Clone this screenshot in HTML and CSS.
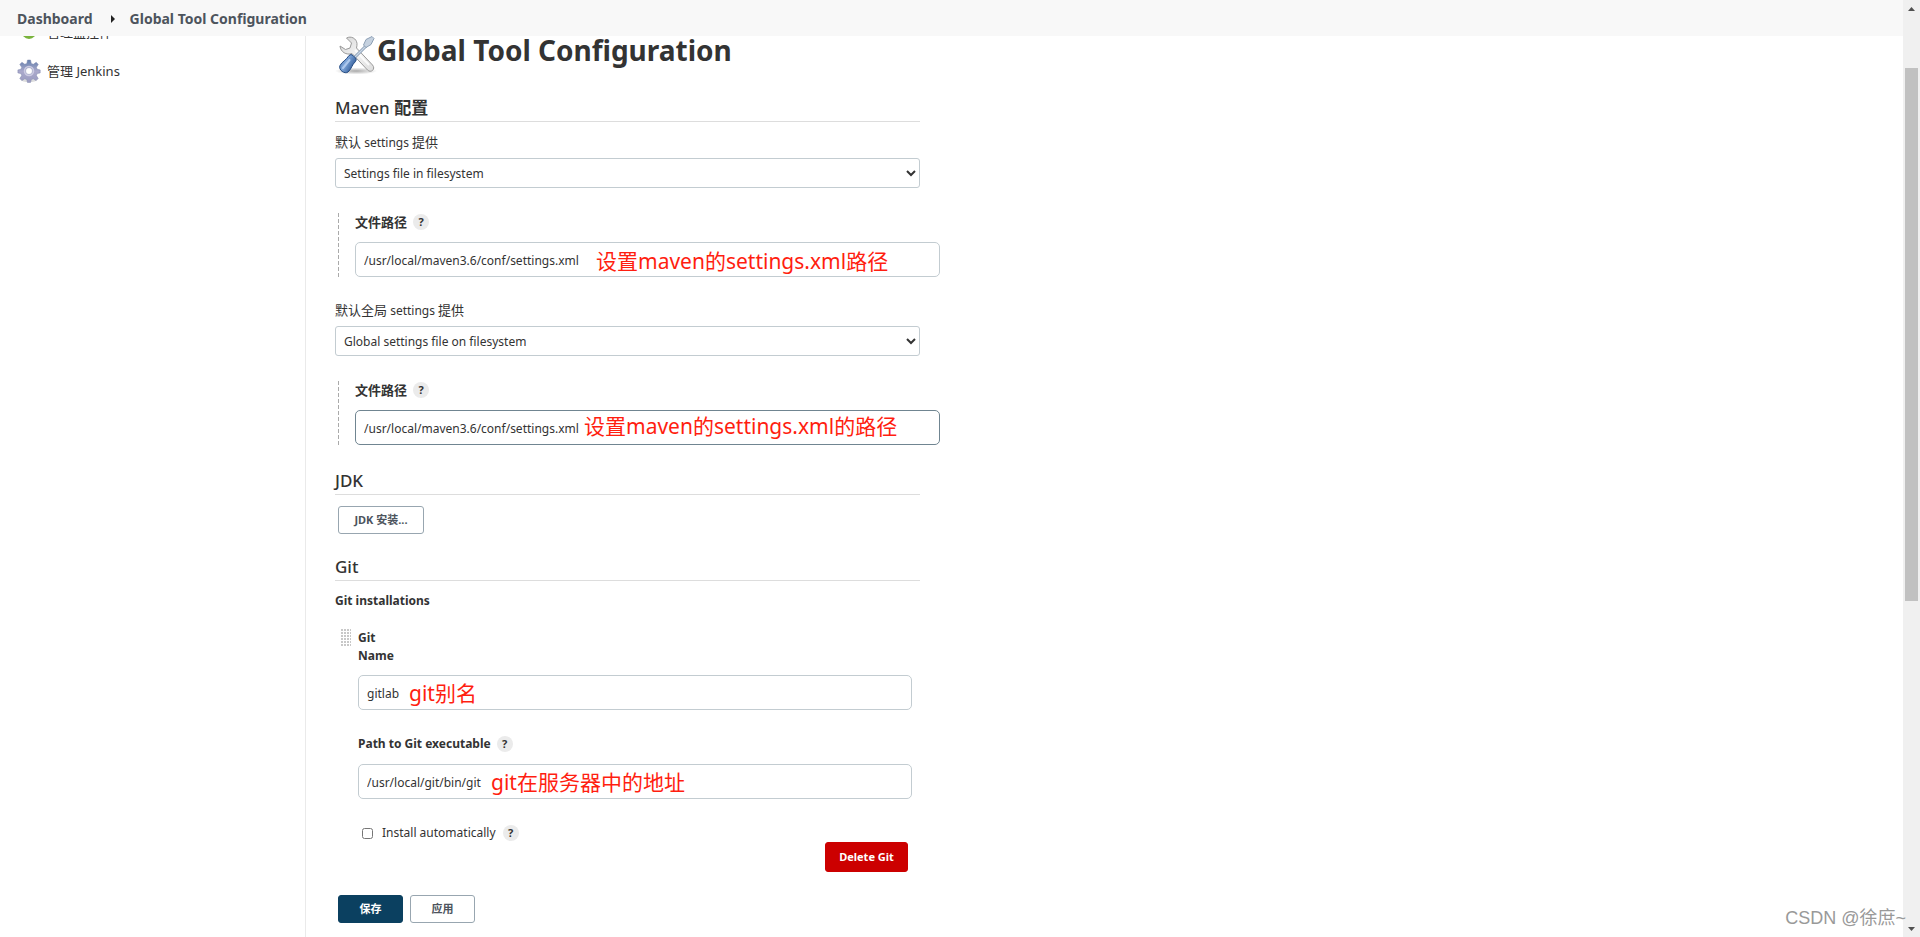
FILE: index.html
```html
<!DOCTYPE html>
<html lang="zh-CN">
<head>
<meta charset="utf-8">
<title>Global Tool Configuration [Jenkins]</title>
<link rel="stylesheet" href="styles.css">
</head>
<body>
<div class="viewport">
  <nav class="breadcrumbs" aria-label="Breadcrumb">
    <a href="#">Dashboard</a>
    <svg class="crumb-arrow" viewBox="0 0 4 8" aria-hidden="true"><path d="M0 0L4 4L0 8Z" fill="#222"/></svg>
    <a href="#">Global Tool Configuration</a>
  </nav>
  <div class="page">
    <aside class="sidebar">
      <a class="task" href="#">
        <svg viewBox="0 0 24 24" aria-hidden="true"><ellipse cx="12" cy="10" rx="8" ry="9" fill="#79b33c"/><circle cx="12" cy="9" r="5" fill="#c5e59c"/></svg>
        <span>管理监控件</span>
      </a>
      <a class="task" href="#">
        <svg viewBox="0 0 24 24" aria-hidden="true">
          <defs><linearGradient id="gear" x1="0" y1="0" x2="0" y2="1"><stop offset="0" stop-color="#6480ae"/><stop offset=".5" stop-color="#aaa9cb"/><stop offset="1" stop-color="#9a9bc0"/></linearGradient></defs>
          <ellipse cx="12" cy="21" rx="8" ry="2" fill="#ddd"/>
          <path fill="url(#gear)" stroke="#8189ae" stroke-width=".5" fill-rule="evenodd" d="M10.500 1h3l.8 3.400 2 .9 2.900-2 2.100 2.100-1.900 2.900.8 2 3 .6v3l-3 .7-.8 2 1.800 2.900-2.100 2.100-2.900-1.800-1.900.8-.8 3h-3l-.7-3-2-.8-2.900 1.800-2.100-2.100 1.900-2.900-.8-2-3-.7v-3l3-.6.8-2-1.900-2.900 2.100-2.100 2.900 2 2-.9zM12 8.500a3.500 3.500 0 1 0 0 7 3.500 3.500 0 0 0 0-7z"/>
          <circle cx="12" cy="12" r="4.500" fill="none" stroke="#cccbe2" stroke-width="1.500"/>
        </svg>
        <span>管理 Jenkins</span>
      </a>
    </aside>
    <main class="main">
      <h1>
        <svg viewBox="0 0 42 42" aria-hidden="true">
          <defs>
            <linearGradient id="steel" x1="0" y1="0" x2="1" y2="1"><stop offset="0" stop-color="#d4d4d4"/><stop offset=".5" stop-color="#f3f3f3"/><stop offset="1" stop-color="#dcdcdc"/></linearGradient>
            <linearGradient id="grip" x1="0" y1="0" x2="1" y2=".6"><stop offset="0" stop-color="#315f9f"/><stop offset=".45" stop-color="#81a8db"/><stop offset="1" stop-color="#2a5592"/></linearGradient>
            <radialGradient id="shade"><stop offset="0" stop-color="#aaa"/><stop offset="1" stop-color="#fff"/></radialGradient>
          </defs>
          <ellipse cx="21" cy="36" rx="21" ry="3.500" fill="url(#shade)"/>
          <path fill="url(#steel)" stroke="#9a9a9a" d="M11.500 3C16 .5 21.500 3.500 22 8.500c.1 1.500-.2 3-.5 4.500L37.500 30c3.500 4-1.500 8.500-5 5L17 18.500C11.500 20.500 5.500 17 5 11l5.500 3.500 4.500-1.500 1.500-5z"/>
          <path d="M20 15L34 30" stroke="#fff" stroke-width="2" opacity=".8"/>
          <path d="M18.500 23.500L31 11" stroke="#8298b0" stroke-width="3"/>
          <path d="M18.500 23.500L31 11" stroke="#cbd7e5" stroke-width="1.500"/>
          <path fill="#c5d1df" stroke="#8c9fb4" d="M28.500 10L31 4.500l6-3 2 2-3 6-5 3z"/>
          <path fill="url(#grip)" stroke="#234a82" d="M14 20.500q2-2 4 0l2.500 2.500q1.500 1.500 0 3.500c-4 3.500-3.500 7-7.500 10.500-3 2.500-10-2-8-6.500 2-4 6-5 9-10z"/>
          <path d="M14.500 25L8 33" stroke="#adc8ed" stroke-width="2" stroke-linecap="round"/>
        </svg>
        <span>Global Tool Configuration</span>
      </h1>
      <form class="config">
        <section>
          <h2>Maven <b>配置</b></h2>
          <label class="field-label" for="p1"><span class="cjk">默认</span> settings <span class="cjk">提供</span></label>
          <select id="p1"><option>Settings file in filesystem</option></select>
          <div class="nested">
            <div class="label-row"><label class="cjk" for="f1">文件路径</label><button type="button" class="help" aria-label="Help">?</button></div>
            <div class="annotated"><input id="f1" type="text" value="/usr/local/maven3.6/conf/settings.xml"><span class="note note-a">设置maven的settings.xml路径</span></div>
          </div>
          <label class="field-label" for="p2"><span class="cjk">默认全局</span> settings <span class="cjk">提供</span></label>
          <select id="p2"><option>Global settings file on filesystem</option></select>
          <div class="nested">
            <div class="label-row"><label class="cjk" for="f2">文件路径</label><button type="button" class="help" aria-label="Help">?</button></div>
            <div class="annotated"><input id="f2" class="active" type="text" value="/usr/local/maven3.6/conf/settings.xml"><span class="note note-b">设置maven的settings.xml的路径</span></div>
          </div>
        </section>
        <section>
          <h2>JDK</h2>
          <button type="button" class="btn jdk">JDK 安装...</button>
        </section>
        <section>
          <h2>Git</h2>
          <h3>Git installations</h3>
          <div class="tool">
            <svg class="drag" viewBox="0 0 10 18" aria-hidden="true"><defs><pattern id="dots" width="3" height="3" patternUnits="userSpaceOnUse"><path d="M0 0h2v2h-2z" fill="#c8c8c8"/></pattern></defs><path d="M0 0h10v18H0z" fill="url(#dots)"/></svg>
            <div class="tool-body">
              <div class="tool-line">Git</div>
              <label class="tool-line" for="g1">Name</label>
              <div class="annotated"><input id="g1" type="text" value="gitlab"><span class="note note-c">git别名</span></div>
              <div class="label-row path"><label for="g2">Path to Git executable</label><button type="button" class="help" aria-label="Help">?</button></div>
              <div class="annotated"><input id="g2" type="text" value="/usr/local/git/bin/git"><span class="note note-d">git在服务器中的地址</span></div>
              <div class="check-row"><input id="auto" type="checkbox"><label for="auto">Install automatically</label><button type="button" class="help" aria-label="Help">?</button></div>
              <div class="delete-row"><button type="button" class="btn danger">Delete Git</button></div>
            </div>
          </div>
        </section>
        <div class="actions"><button type="submit" class="btn primary">保存</button><button type="button" class="btn apply">应用</button></div>
      </form>
    </main>
  </div>
  <div class="scrollbar" aria-hidden="true">
    <svg viewBox="0 0 7 4"><path d="M0 4L3.500 0L7 4Z" fill="#505050"/></svg>
    <div class="track"><div class="thumb"></div></div>
    <svg viewBox="0 0 7 4"><path d="M0 0L3.500 4L7 0Z" fill="#505050"/></svg>
  </div>
  <div class="watermark">CSDN @徐庶~</div>
</div>
</body>
</html>
```

FILE: styles.css
```css
* { box-sizing: border-box; }
body {
  margin: 0;
  color: #333;
  background: #fff;
  font: 12px/18px "Noto Sans", "Noto Sans CJK SC", sans-serif;
}
a { color: inherit; text-decoration: none; }
button, input, select { font: inherit; color: inherit; margin: 0; }
.viewport {
  position: relative;
  height: 100vh;
  overflow: hidden;
  display: grid;
  grid-template: 36px 1fr / 1fr 17px;
}
.breadcrumbs {
  display: flex;
  align-items: center;
  gap: 15px;
  padding: 2px 17px 0;
  background: #f8f8f8;
  color: #4d545d;
  font-size: 14px;
  font-weight: 700;
}
.crumb-arrow { width: 4px; height: 8px; margin-left: 3px; }
.page {
  grid-row: 2;
  display: flex;
  min-height: 0;
  overflow: hidden;
}
.sidebar {
  flex: 0 0 306px;
  border-right: 1px solid #eaeaea;
  padding-left: 17px;
  display: flex;
  flex-direction: column;
  margin-top: -24px;
}
.task { display: flex; align-items: center; gap: 6px; height: 39px; flex: none; }
.task svg { width: 24px; height: 24px; }
.task span { font-size: 13px; }
.main { flex: 1; padding-left: 29px; min-width: 0; }
h1 {
  display: flex;
  align-items: center;
  height: 40px;
  margin: 0 0 20px;
  font-size: 28px;
  line-height: 32px;
}
h1 svg { width: 42px; height: 42px; flex: none; }
h1 span { padding-bottom: 12px; }
.config { max-width: 585px; }
h2 {
  margin: 0 0 11px;
  padding-bottom: 2px;
  border-bottom: 1px solid #ddd;
  font-size: 17px;
  line-height: 23px;
  font-weight: 500;
}
.field-label { display: block; height: 18px; margin-bottom: 7px; }
.cjk { font-size: 13px; }
select {
  display: block;
  width: 100%;
  height: 30px;
  padding: 0 4px;
  border: 1px solid #c3ccd1;
  border-radius: 3px;
  background: #fff;
}
.nested {
  width: 100%;
  margin: 25px 0 24px 3px;
  padding-left: 17px;
  background: repeating-linear-gradient(#aaa 0 4px, transparent 4px 6px) left / 1px 100% no-repeat;
  box-sizing: content-box;
}
.label-row { display: flex; align-items: center; gap: 6px; height: 18px; margin-bottom: 11px; font-weight: 700; }
.help {
  width: 16px;
  height: 16px;
  padding: 0;
  border: 0;
  border-radius: 8px;
  background: #ebebeb;
  font-size: 11px;
  line-height: 16px;
  font-weight: 700;
}
.annotated { position: relative; }
input[type="text"] {
  display: block;
  width: 100%;
  height: 35px;
  padding: 1px 8px 0;
  border: 1px solid #c3ccd1;
  border-radius: 5px;
  background: #fff;
}
input[type="text"].active { border-color: #708591; }
.note {
  position: absolute;
  top: 5px;
  color: #ff1e10;
  font-size: 21px;
  line-height: 26px;
  white-space: nowrap;
  pointer-events: none;
}
.note-a { left: 241px; top: 6px; }
.note-b { left: 229px; top: 3px; }
.note-c { left: 51px; }
.note-d { left: 133px; }
.btn {
  height: 28px;
  padding: 0 16px;
  border: 1px solid #98a6b0;
  border-radius: 3px;
  background: #fff;
  color: #4d545d;
  font-size: 11px;
  line-height: 16px;
  font-weight: 700;
}
.jdk { display: block; margin: 0 0 21px 3px; width: 86px; padding: 0; }
h3 { margin: 0; font-size: 12px; line-height: 18px; }
.tool { display: flex; gap: 7px; padding: 19px 8px 0 6px; }
.drag { width: 10px; height: 18px; flex: none; }
.tool-body { flex: 1; }
.tool-line { display: block; font-weight: 700; }
label.tool-line { margin-bottom: 10px; }
.path { margin-top: 25px; }
.check-row { display: flex; align-items: center; height: 18px; margin-top: 25px; padding-left: 4px; }
.check-row input { width: 11px; height: 11px; margin-right: 9px; }
.check-row label { margin-right: 7px; }
.delete-row { display: flex; justify-content: flex-end; padding-right: 4px; }
.danger { height: 30px; background: #c00; border-color: #c00; color: #fff; width: 83px; padding: 0; }
.actions { display: flex; gap: 7px; padding: 23px 0 0 3px; }
.actions .btn { width: 65px; padding: 0; }
.actions .primary { background: #0b4060; border-color: #0b4060; color: #fff; }
.scrollbar {
  grid-area: 1 / 2 / 3 / 3;
  display: flex;
  flex-direction: column;
  align-items: center;
  background: #f0f0f0;
  padding: 7px 0 6px;
}
.scrollbar svg { width: 7px; height: 4px; flex: none; }
.track { flex: 1; width: 13px; padding: 57px 0 0; }
.thumb { height: 62%; min-height: 40px; background: #c1c1c1; }
.watermark {
  position: absolute;
  right: 14px;
  bottom: 6px;
  color: #999;
  font: 18px/26px "Liberation Sans", "Noto Sans CJK SC", sans-serif;
}
```
